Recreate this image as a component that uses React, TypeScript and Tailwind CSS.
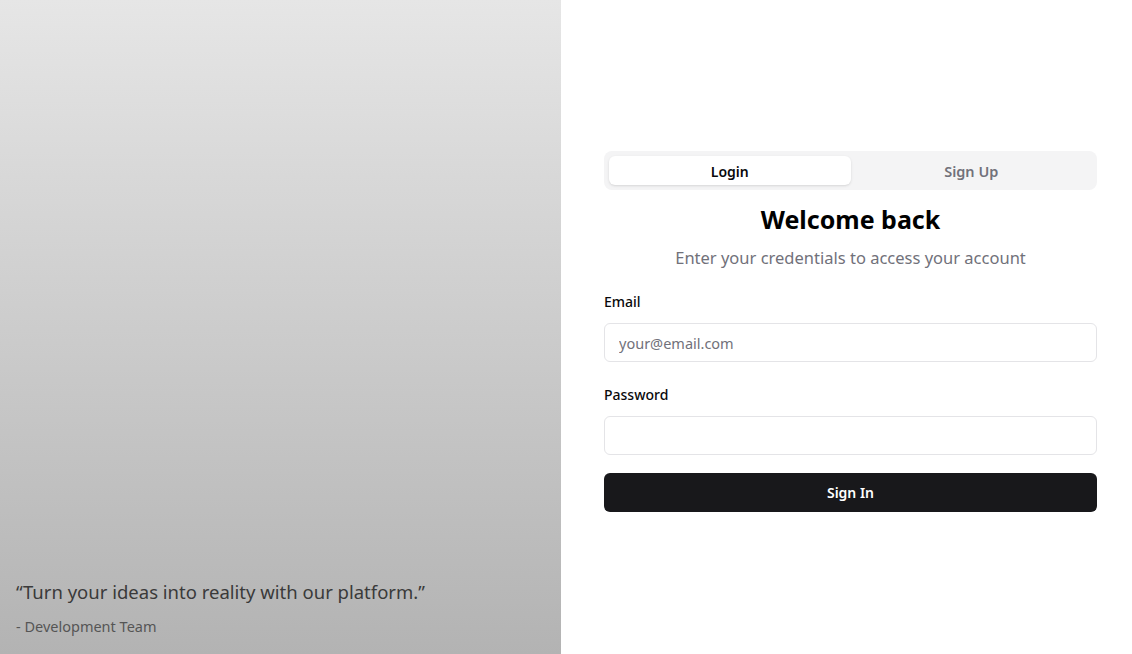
import React from "react";

export default function App() {
  return (
    <div className="flex h-[654px] w-full bg-white" style={{ fontFamily: '"Noto Sans", "Open Sans", sans-serif' }}>
      <div className="flex h-full w-[561px] shrink-0 flex-col justify-end bg-gradient-to-b from-[#e6e6e6] to-[#b3b3b3] px-4 pb-[18px]">
        <p className="text-[18.5px] leading-7 text-[#3a3a3a]">“Turn your ideas into reality with our platform.”</p>
        <p className="mt-[10px] text-[14.5px] leading-5 text-[#555555]">- Development Team</p>
      </div>
      <div className="flex flex-1 flex-col pt-[151px]">
        <div className="ml-[43px] w-[493px]">
          <div className="grid h-[39px] grid-cols-2 rounded-lg bg-[#f4f4f5] p-[5px]">
            <button className="rounded-md bg-white pt-px text-[14px] font-semibold text-[#09090b] shadow-sm">Login</button>
            <button className="rounded-md pt-[2px] text-[14.5px] font-semibold text-[#71717a]">Sign Up</button>
          </div>
          <h1 className="mt-[13px] text-center text-[25px] font-bold leading-8 text-black">Welcome back</h1>
          <p className="mt-[11px] text-center text-[16.5px] leading-6 text-[#71717a]">Enter your credentials to access your account</p>
          <div className="mt-[22px]">
            <label className="block text-[14px] font-medium leading-5 text-[#09090b]">Email</label>
            <input
              type="email"
              placeholder="your@email.com"
              className="mt-[11px] h-[39px] w-full rounded-md border border-[#e4e4e7] bg-white px-[14px] text-[14.5px] text-[#09090b] placeholder:text-[#71717a] outline-none"
            />
          </div>
          <div className="mt-[23px]">
            <label className="block text-[14px] font-medium leading-5 text-[#09090b]">Password</label>
            <input
              type="password"
              className="mt-[11px] h-[39px] w-full rounded-md border border-[#e4e4e7] bg-white px-[14px] text-[14px] outline-none"
            />
          </div>
          <button className="mt-[18px] h-[39px] w-full rounded-md bg-[#18181b] text-[14px] font-semibold text-white">Sign In</button>
        </div>
      </div>
    </div>
  );
}
